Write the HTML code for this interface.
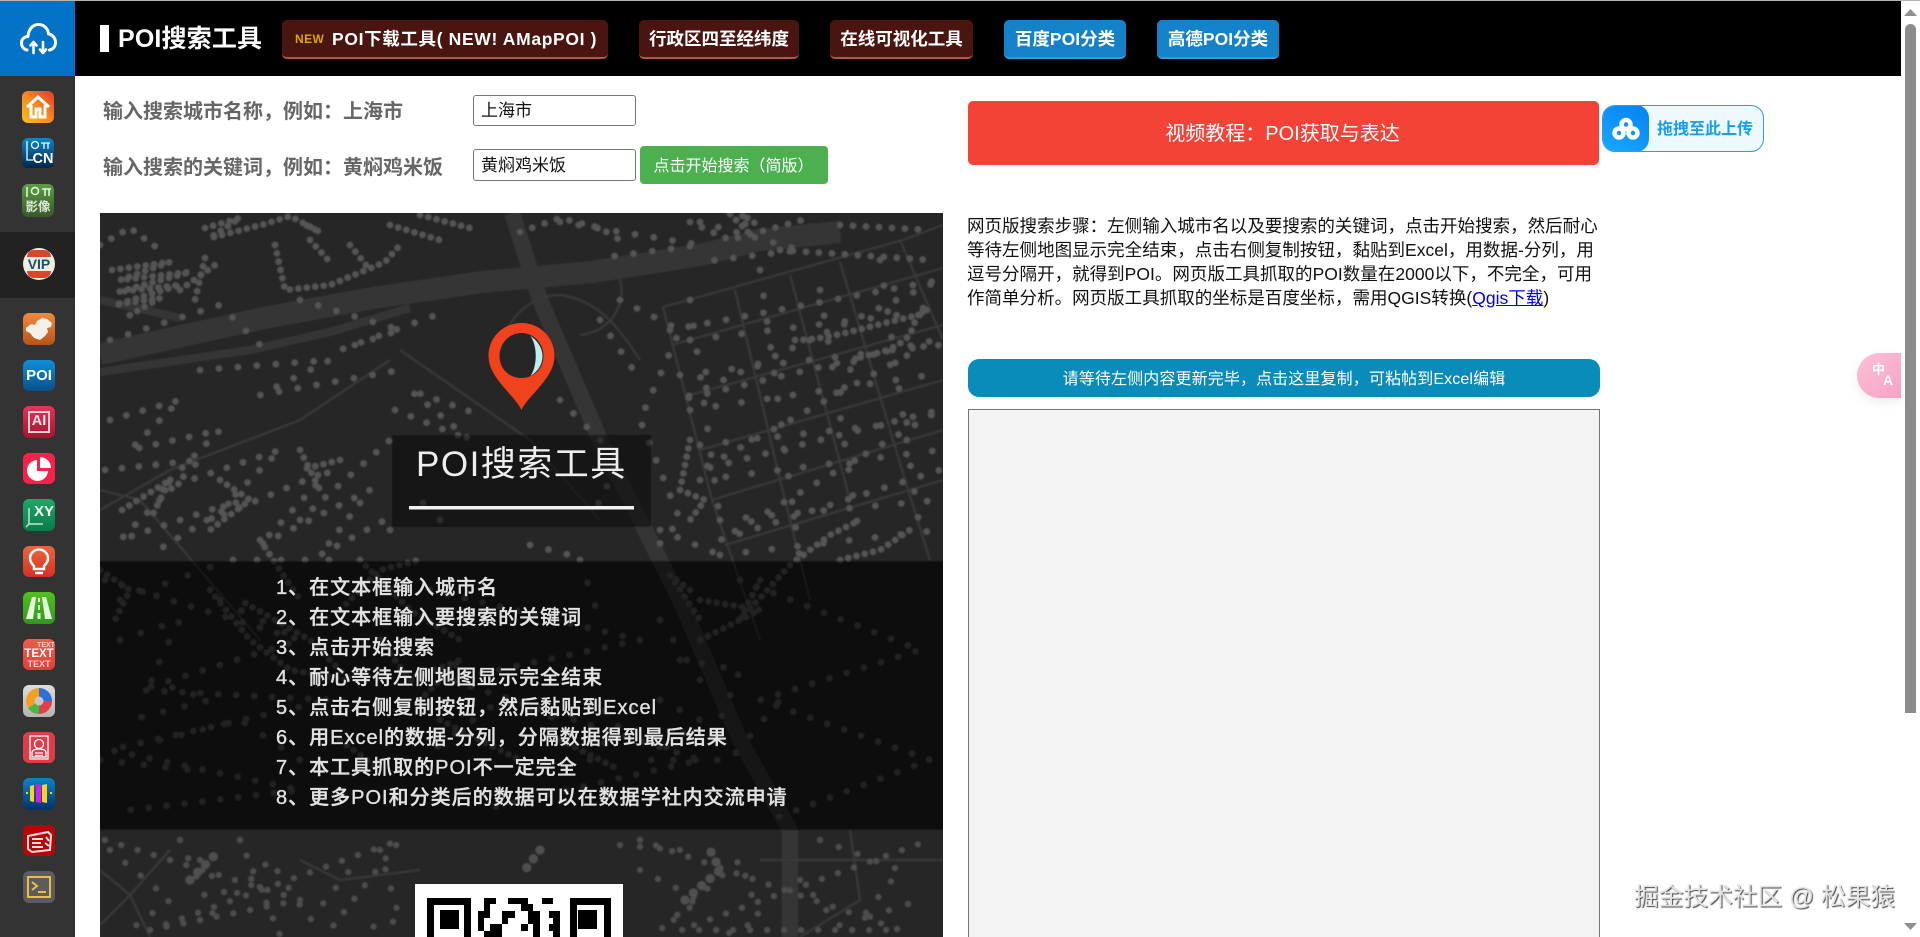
<!DOCTYPE html>
<html lang="zh-CN"><head><meta charset="utf-8"><title>POI搜索工具</title>
<style>
html,body{margin:0;padding:0;width:1920px;height:937px;overflow:hidden;background:#fff}
body{font-family:"Liberation Sans","Noto Sans CJK SC",sans-serif;position:relative}
.a{position:absolute;white-space:nowrap;box-sizing:border-box}
.btn{top:20px;height:39px;border-radius:5px;color:#fff;font-weight:700;font-size:17.5px;line-height:38px;text-align:center}
.r{background:#4a1410;border-bottom:2px solid #c0504d}
.b{background:#1482c8;border-bottom:2px solid #3a9ad8}
.lbl{left:103px;font-size:20px;font-weight:700;color:#666;line-height:30px}
.inp{left:473px;width:163px;background:#fff;border:1px solid #767676;border-radius:3px;font-size:17px;color:#111;padding-left:7px}
.ic{left:23px;width:32px;height:32px;border-radius:6px;overflow:hidden}
.ic svg{display:block}
.ict{position:absolute;left:0;width:32px;text-align:center;font-weight:700;color:#fff}
.l{left:276px;font-size:20px;letter-spacing:1px;color:#e2e2e2;line-height:30px;font-weight:500;-webkit-text-stroke:.35px #e2e2e2}
</style></head><body>
<div class="a" style="left:0;top:1px;width:75px;height:936px;background:#333"></div>
<div class="a" style="left:0;top:1px;width:75px;height:75px;background:#0272c6"></div>
<div class="a" style="left:75px;top:1px;width:1826px;height:75px;background:#000"></div>
<div class="a" style="left:0;top:0;width:1920px;height:1px;background:#b4b4b4"></div>
<svg class="a" style="left:18px;top:20px" width="40" height="36" viewBox="0 0 40 36" fill="none" stroke="#fff" stroke-width="3" stroke-linecap="round" stroke-linejoin="round"><path d="M9 30C5 29 3.500 26 3.500 23 3.500 19 6.500 16.500 10 16.500 10.500 9 15 4.500 20.500 4.500 26 4.500 30 8.500 30.500 14 34.500 14.500 37.500 18 37.500 22.500 37.500 26.500 35 29.500 31.500 30"/><path d="M15.500 33V22M12.500 25.500L15.500 22 18.500 25.500M25 22V33M22 29.500L25 33 28 29.500" stroke-width="2.600"/></svg>
<div class="a ic" style="top:91px;background:linear-gradient(45deg,#ffbe1e,#f58a20 50%,#e6392a);left:22px"><svg width="32" height="32" fill="none" stroke="#fff" stroke-width="3"><path d="M5 16L16 6 27 16M9 14V26H14V18H18V26H23V14"/></svg></div>
<div class="a ic" style="top:138px;height:30px;background:linear-gradient(#0f86c8,#06244a);left:22px"><svg width="32" height="30" fill="none" stroke="#dff" stroke-width="1.300"><path d="M5 3V22H11"/><circle cx="13" cy="7" r="3.500"/><path d="M19 5H28M22 5V11M26 5V11"/></svg><span class="ict" style="top:13px;left:5px;font-size:14.500px;line-height:16px">CN</span></div>
<div class="a ic" style="top:184px;height:33px;background:linear-gradient(#5f9a45,#355a2a);left:22px"><svg width="32" height="14" fill="none" stroke="#dfd" stroke-width="1.500"><path d="M5 3V13"/><circle cx="13" cy="7" r="3.500"/><path d="M20 5H29M23 5V12M27 5V12"/></svg><span class="ict" style="top:15px;font-size:12.500px;line-height:16px;color:#dde8d5">影像</span></div>
<div class="a" style="left:0;top:232px;width:75px;height:66px;background:#222"></div>
<div class="a" style="left:23px;top:248px;width:32px;height:32px;border-radius:50%;background:#f0ece0;overflow:hidden"><div class="a" style="left:4px;top:2px;width:24px;height:7px;background:#d9472b;border-radius:8px 8px 0 0"></div><div class="a" style="left:4px;top:23px;width:24px;height:7px;background:#d9472b;border-radius:0 0 8px 8px"></div><span class="ict" style="top:8px;font-size:14px;line-height:16px;color:#1d4f6b">VIP</span></div>
<div class="a ic" style="top:313px;background:linear-gradient(#ef8a3e,#b8541a)"><svg width="32" height="32"><path d="M3 15L8 11 12 12 14 8 19 5 24 6 29 10 28 14 24 15 25 19 22 23 17 27 11 25 7 20 3 18Z" fill="#f4efe9"/></svg></div>
<div class="a ic" style="top:360px;height:31px;background:linear-gradient(#0f90d8,#0a4f88)"><span class="ict" style="top:7px;font-size:15px;line-height:17px">POI</span></div>
<div class="a ic" style="top:406px;background:linear-gradient(#e6345a,#a8142e)"><div class="a" style="left:5px;top:5px;width:22px;height:22px;border:2px solid #f5d0d6"></div><span class="ict" style="top:7px;font-size:14.500px;line-height:17px;color:#fbe5e8">AI</span></div>
<div class="a ic" style="top:453px;height:31px;background:#f5224a"><svg width="32" height="31"><path d="M14 7A10.500 10.500 0 1 0 25 18H14Z" fill="#fff"/><path d="M17 4A11 11 0 0 1 28 15H17Z" fill="#fff"/></svg></div>
<div class="a ic" style="top:499px;background:linear-gradient(#20a868,#0d7a48)"><svg width="32" height="32" fill="none" stroke="#bfe8cf" stroke-width="1.500"><path d="M6 9V25H20M6 25L3 28"/></svg><span class="ict" style="top:4px;left:5px;font-size:15px;line-height:17px">XY</span></div>
<div class="a ic" style="top:546px;height:31px;background:linear-gradient(#e8683c,#d83024)"><svg width="32" height="31" fill="none" stroke="#fff" stroke-width="2.500"><path d="M11 20C8 17 7 15 7 12.500A9 9 0 0 1 25 12.500C25 15 24 17 21 20V23H11ZM12 27H20"/></svg></div>
<div class="a ic" style="top:592px;background:linear-gradient(#50c020,#2f9a18)"><svg width="32" height="32" fill="#e8f8e0"><path d="M9 5H13L10 27H3ZM19 5H23L29 27H22ZM15 6H17V10H15ZM15 13H17V18H15ZM14.500 21H17.500V27H14.500Z"/></svg></div>
<div class="a ic" style="top:639px;height:31px;background:linear-gradient(#ee5c4c,#e04038)"><span class="ict" style="top:3px;left:7px;font-size:7px;line-height:8px;color:#fcc">TEXT</span><span class="ict" style="top:9px;font-size:11.500px;line-height:12px;font-weight:700">TEXT</span><span class="ict" style="top:20px;font-size:9px;line-height:10px;color:#fcc">TEXT</span></div>
<div class="a ic" style="top:685px;background:linear-gradient(#ddd,#b4b4b4)"><svg width="32" height="32"><circle cx="16" cy="16" r="13" fill="#f6a020"/><path d="M16 16L16 3A13 13 0 0 1 29 16Z" fill="#2a70d8"/><path d="M16 16L29 16A13 13 0 0 1 16 29Z" fill="#e04048"/><path d="M16 16L16 29A13 13 0 0 1 5 23Z" fill="#48b848"/><circle cx="16" cy="16" r="4.500" fill="#c8c8c8"/></svg></div>
<div class="a ic" style="top:732px;height:31px;background:#e03c48"><svg width="32" height="31" fill="none" stroke="#fff" stroke-width="1.300"><path d="M7 4H25V27H7Z"/><circle cx="16" cy="12" r="4.500"/><path d="M9 25V21C9 18 12 17 16 17 20 17 23 18 23 21V25ZM12 21H20M12 23.500H20"/></svg></div>
<div class="a ic" style="top:778px;background:linear-gradient(#0c84c8,#05306e)"><svg width="32" height="32"><path d="M7 8L11 7V24L7 23Z" fill="#ffd21e"/><path d="M13 6L18 7V25L13 24Z" fill="#d820d8"/><path d="M19 7L24 6V25L19 24Z" fill="#ffd21e"/><path d="M3 15H5M27 15H29" stroke="#ffd21e" stroke-width="2"/></svg></div>
<div class="a ic" style="top:825px;height:31px;background:#b80606"><svg width="32" height="31" fill="none" stroke="#f8e0e0" stroke-width="2"><path d="M5 11L25 7 28 10 27 25 9 27 5 24ZM9 14H20M9 18H18M9 22H20M23 12L26 16M22 18L26 21"/></svg></div>
<div class="a ic" style="top:871px;background:#5c5c5e"><svg width="32" height="32" fill="none" stroke="#e8c040" stroke-width="2"><rect x="5" y="6" width="22" height="20"/><path d="M9 11L14 15 9 19M15 21H23"/></svg></div>

<div class="a" style="left:100px;top:25px;width:9px;height:27px;background:#fff"></div>
<div class="a" style="left:118px;top:21px;font-size:25px;font-weight:700;color:#fff;line-height:36px;letter-spacing:.15px">POI搜索工具</div>
<div class="a btn r" style="left:282px;width:326px"></div>
<div class="a" style="left:295px;top:32px;font-size:12px;line-height:14px;font-weight:700;color:#d9a800;letter-spacing:.4px">NEW</div>
<div class="a" style="left:332px;top:21px;font-size:17.500px;font-weight:700;color:#fff;line-height:36px;letter-spacing:.65px">POI下载工具( NEW! AMapPOI )</div>
<div class="a btn r" style="left:639px;width:160px">行政区四至经纬度</div>
<div class="a btn r" style="left:830px;width:143px">在线可视化工具</div>
<div class="a btn b" style="left:1004px;width:122px">百度POI分类</div>
<div class="a btn b" style="left:1157px;width:122px">高德POI分类</div>

<div class="a lbl" style="top:97px">输入搜索城市名称，例如：上海市</div>
<div class="a lbl" style="top:152px;margin-top:1px">输入搜索的关键词，例如：黄焖鸡米饭</div>
<div class="a inp" style="top:95px;height:31px;line-height:29px">上海市</div>
<div class="a inp" style="top:149px;height:32px;line-height:32px">黄焖鸡米饭</div>
<div class="a" style="left:640px;top:146px;width:188px;height:38px;background:#4caf50;border-radius:4px;color:#fff;font-size:16px;line-height:42px;text-align:center;text-indent:-1px">点击开始搜索（简版）</div>

<div class="a" style="left:968px;top:101px;width:631px;height:64px;background:#f44336;border-radius:5px;color:#fff;font-size:20px;line-height:67px;text-align:center;text-indent:-2px">视频教程：POI获取与表达</div>
<div class="a" style="left:1602px;top:105px;width:162px;height:47px;background:#eef8ff;border:1px solid #2a9ce8;border-radius:13px;overflow:hidden"><div class="a" style="left:-1px;top:-1px;width:47px;height:47px;border-radius:13px;background:linear-gradient(30deg,#18aaff,#0680f0)"></div>
<svg class="a" style="left:9px;top:10px" width="28" height="26" fill="none" stroke="#fff" stroke-width="4.500"><circle cx="14" cy="8.500" r="4.500"/><circle cx="7" cy="17" r="4.500"/><circle cx="21" cy="17" r="4.500"/></svg>
<div class="a" style="left:54px;top:10px;font-size:16px;font-weight:700;color:#1a9cf0;line-height:28px">拖拽至此上传</div></div>

<div class="a" style="left:967px;top:214px;font-size:17.500px;letter-spacing:.02px;line-height:24px;color:#111">网页版搜索步骤：左侧输入城市名以及要搜索的关键词，点击开始搜索，然后耐心<br>等待左侧地图显示完全结束，点击右侧复制按钮，黏贴到Excel，用数据-分列，用<br>逗号分隔开，就得到POI。网页版工具抓取的POI数量在2000以下，不完全，可用<br>作简单分析。网页版工具抓取的坐标是百度坐标，需用QGIS转换(<span style="color:#0000ee;text-decoration:underline">Qgis下载</span>)</div>
<div class="a" style="left:968px;top:359px;width:632px;height:38px;background:#0a8cba;border-radius:11px;color:#fff;font-size:16px;letter-spacing:.12px;line-height:42px;text-align:center">请等待左侧内容更新完毕，点击这里复制，可粘帖到Excel编辑</div>
<div class="a" style="left:968px;top:409px;width:632px;height:540px;background:#f4f4f4;border:1px solid #767676"></div>

<svg class="a" style="left:100px;top:213px" width="843" height="724" viewBox="100 213 843 724">
<defs><filter id="s" filterUnits="userSpaceOnUse" x="80" y="193" width="883" height="764"><feGaussianBlur stdDeviation=".7"/></filter></defs>
<g filter="url(#s)">
<rect x="85" y="198" width="873" height="754" fill="#282828"/>
<g fill="none" stroke="#343434" stroke-linejoin="round">
<path stroke-width="22" d="M100 354L264 318 373 298 482 282 592 272 700 255 760 240 840 232"/>
<path stroke-width="16" d="M512 213L540 300 600 440 680 600 740 740 790 830V937"/>
<path stroke-width="8" d="M100 372L250 350 330 332 410 308M100 300L180 318"/>
</g>
<g fill="none" stroke="#393939" stroke-width="2.200">
<path d="M663 307L903 240 943 225M672 345L943 268M690 395L943 325M700 450L943 380M712 500L943 430M725 545L943 480"/>
<path d="M663 307L712 500 760 640M735 290L780 480 810 600M790 275L850 500M840 262L905 480 930 560M900 240L943 340"/>
<path d="M640 360C620 330 600 300 560 295 530 295 505 320 500 350M615 270C630 290 620 330 580 335M100 510L170 470 300 420 390 360M100 490L140 500 200 570 260 640M400 350L530 440 600 520"/>
<path d="M100 870L130 895 170 850M130 895L150 937M100 925L130 895M300 860L340 880 420 870M760 860H943M850 830L860 900 800 937"/>
</g>
<g fill="none" stroke="#545454" stroke-width="6.500" stroke-linecap="round" stroke-linejoin="round" stroke-dasharray="0 8.500">
<path d="M112 270L170 262 120 280 190 272 118 292 180 285 115 305 160 298 125 318"/>
<path d="M205 228L240 218 210 238 265 224 290 216 320 232 300 222M180 290L215 265M205 258L195 300"/>
<path d="M275 245L285 290 330 285 385 262 400 245M310 240L330 262M350 245L370 270M420 215L470 228M390 225L440 240"/>
<path stroke-dasharray="0 13" d="M100 245L130 228 160 250M520 232L560 218 600 228 620 240M690 222L730 240 810 218M840 225L930 230M780 250L930 260"/>
<path d="M730 214L748 232 742 214 756 224"/>
<path d="M795 340C830 340 870 325 920 315 935 310 925 290 910 335 880 365 850 345 850 375 870 400 820 330"/>
<path stroke-dasharray="0 26" d="M690 340L940 310M680 375L940 345M690 410L930 375M700 445L930 420M700 480L940 450M720 520L940 500M720 555L940 530M690 300L720 520M760 270L800 560M820 290L860 540M880 260L920 530"/>
<path d="M690 440L680 490 705 500 690 520M690 590L670 575 700 620M760 580L740 620 790 565 830 535 860 520M700 600L760 610 700 640M840 560L880 550 910 530"/>
<path d="M122 510L170 480 150 520M100 570L130 590 115 620M220 480L250 500 210 530M300 450L320 490M340 460L300 470"/>
<path d="M210 590L250 640 290 670 350 680 310 640 240 600M340 610L380 570 420 560M260 540L300 600M380 640L410 680 460 660 420 700"/>
<path stroke-dasharray="0 22" d="M120 640L180 620 150 680 210 700 130 720M160 740L240 720 300 760M100 760L190 770M420 760L500 700 560 720 600 700 620 750M660 700L700 720 650 760 730 760 780 700M590 760L640 700M680 660L740 670 720 720"/>
<path d="M360 560L410 610 460 640M440 720L520 760M560 740L620 770M340 740L380 770"/>
<path stroke-dasharray="0 24" d="M120 600L230 560 330 560M220 600L300 640M440 520L420 500M580 560L600 620M660 620L700 680"/>
<path stroke-dasharray="0 17" d="M110 420L180 400 130 450 220 430 160 490 280 450 210 520 330 470 260 545 370 490 320 555 385 520M105 470L200 460 120 540 240 500 150 555M300 520L390 440M395 410L470 440 410 390 480 415"/>
<path stroke-dasharray="0 19" d="M670 330L940 280 680 400 935 340 700 470 940 410 720 540 940 470M620 300L680 330 640 420 680 520 650 555M600 320L640 380M560 400L620 460 590 520M390 530H380M660 530L720 555M530 545L570 555"/>
<path stroke-dasharray="0 19" d="M560 222L700 245 600 258M700 222L800 250 700 262M110 340L220 305 260 345M300 300L400 330 340 350 450 310M200 370L330 360 260 395 400 370"/>
<path stroke-dasharray="0 18" d="M105 580L300 640 140 690 330 700 110 750 300 790 130 810M430 590L640 640 450 680 700 760 480 810M740 580L920 650 760 700 930 760 770 820"/>
</g>
<g fill="none" stroke="#4e4e4e" stroke-width="6" stroke-linecap="round" stroke-dasharray="0 20">
<path d="M110 850L170 900 130 930M200 860L230 900 270 860 310 920 350 870M380 850L400 920 360 930M640 870L700 900 660 930 740 860 760 920 720 937M620 845L680 850M820 840L900 870 860 920 920 900M800 880L850 937M180 840L220 930"/>
<path stroke-dasharray="0 17" d="M105 840L300 900 150 930 400 840 330 930M640 840L900 930 680 930 930 840M240 840L280 935"/>
</g>
<g fill="none" stroke="#505050" stroke-width="9" stroke-linecap="round" stroke-dasharray="0 11"><path d="M190 880L215 855M685 900L720 870 710 850M540 850L525 870"/></g>
<rect x="85" y="561" width="873" height="269" fill="#000" fill-opacity=".6"/>
<rect x="392" y="435" width="259" height="92" fill="#000" fill-opacity=".45"/>
</g>
<g transform="translate(-3.500 0)">
<path fill-rule="evenodd" fill="#f0421c" d="M525 410C518 395 492 378 492 356 492 337 507 323 525 323 543 323 558 337 558 356 558 378 532 395 525 410ZM525 333C513 333 503 343 503 356 503 369 513 378 525 378 537 378 547 369 547 356 547 343 537 333 525 333Z"/>
<path fill="#bfeef2" d="M534 336C543 342 546 350 546 356 546 364 542 371 534 376 541 366 541 346 534 336Z"/>
</g>
<text x="416" y="476" font-size="35" fill="#eee" letter-spacing="1.500" font-family="Liberation Sans,Noto Sans CJK SC,sans-serif">POI搜索工具</text>
<rect x="409" y="506" width="225" height="3.500" fill="#f2f2f2"/>
<rect x="415" y="884" width="208" height="53" fill="#fff"/>
<g fill="#000">
<path fill-rule="evenodd" d="M427 898H471V937H427ZM434 905V937H464V905Z"/><rect x="440" y="910" width="19" height="19"/>
<path fill-rule="evenodd" d="M570 898H611V937H570ZM577 905V937H604V905Z"/><rect x="578" y="910" width="19" height="19"/>
<path d="M484 898H496V904H490V918H484V931H478V911H484ZM508 898H528V904H533V911H540V918H528V911H521V904H508ZM502 911H515V918H508V924H502ZM542 898H553V904H542ZM549 911H560V924H553V918H549ZM521 924H528V931H521ZM490 924H502V937H484V931H490ZM528 918H540V931H533V924H528ZM549 924H560V937H553V931H549ZM533 931H540V937H533Z"/>
</g>
</svg>
<div class="a l" style="top:573px">1、在文本框输入城市名</div>
<div class="a l" style="top:603px">2、在文本框输入要搜索的关键词</div>
<div class="a l" style="top:633px">3、点击开始搜索</div>
<div class="a l" style="top:663px">4、耐心等待左侧地图显示完全结束</div>
<div class="a l" style="top:693px">5、点击右侧复制按钮，然后黏贴到Excel</div>
<div class="a l" style="top:723px">6、用Excel的数据-分列，分隔数据得到最后结果</div>
<div class="a l" style="top:753px">7、本工具抓取的POI不一定完全</div>
<div class="a l" style="top:783px">8、更多POI和分类后的数据可以在数据学社内交流申请</div>

<div class="a" style="left:1905px;top:24px;width:11px;height:689px;background:#8c8c8c;border-radius:6px 6px 0 0"></div>
<svg class="a" style="left:1904px;top:8px" width="14" height="9"><path d="M0 8H13L6.500 1Z" fill="#8f8f8f"/></svg>
<svg class="a" style="left:1904px;top:922px" width="14" height="9"><path d="M0 1H13L6.500 8Z" fill="#8f8f8f"/></svg>
<div class="a" style="left:1857px;top:353px;width:44px;height:45px;border-radius:23px 0 0 23px;background:linear-gradient(135deg,#fcc0d8,#f5a3c4);box-shadow:0 4px 10px rgba(0,0,0,.08)"><span class="a" style="left:15px;top:10px;font-size:13px;line-height:14px;color:#fff;font-weight:700">中</span><span class="a" style="left:26px;top:20px;font-size:14px;line-height:15px;color:#fff;font-weight:700">A</span></div>
<div class="a" style="left:1634px;top:882px;font-size:24.700px;line-height:32px;color:#e4e4e4;text-shadow:1px 1px 1px #444">掘金技术社区 @ 松果猿</div>
</body></html>
